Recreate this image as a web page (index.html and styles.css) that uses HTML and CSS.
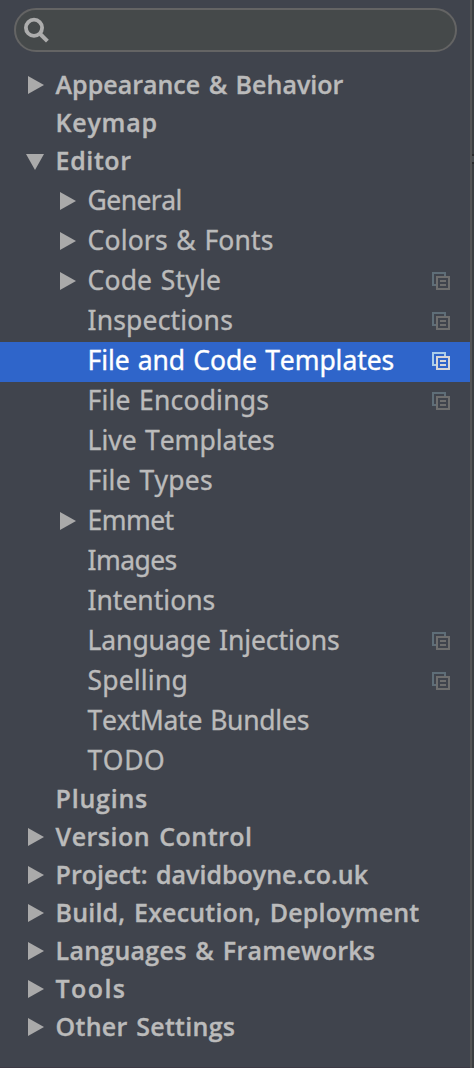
FILE: index.html
```
<!DOCTYPE html>
<html lang="en">
<head>
<meta charset="utf-8">
<title>Settings</title>
<link rel="stylesheet" href="styles.css">
</head>
<body>
<svg width="0" height="0" class="defs">
  <symbol id="right" viewBox="0 0 18 18"><path d="M2 0L18 9L2 18Z" fill="#aaa"/></symbol>
  <symbol id="down" viewBox="0 0 18 18"><path d="M0 1H18L9 17Z" fill="#aaa"/></symbol>
  <symbol id="copy" viewBox="0 0 18 18">
    <path class="back" d="M0 0H14V4H12V2H2V12H4V14H0Z"/>
    <path class="front" fill-rule="evenodd" d="M4 4H18V18H4ZM6 6V16H16V6ZM8 8H14V10H8ZM8 12H14V14H8Z"/>
  </symbol>
</svg>
<div class="window">
  <aside class="sidebar">
    <div class="search">
      <svg width="28" height="28" viewBox="0 0 28 28" fill="none" stroke="#adadad"><circle cx="10" cy="11.8" r="8.1" stroke-width="3.8"/><path d="M15.7 17.5L23.4 25.2" stroke-width="4"/></svg>
    </div>
    <nav class="tree">
      <div class="row top"><svg class="arrow"><use href="#right"/></svg><span>Appearance &amp; Behavior</span></div>
      <div class="row top"><i class="arrow"></i><span class="s8">Keymap</span></div>
      <div class="row top"><svg class="arrow down"><use href="#down"/></svg><span class="s7">Editor</span></div>
      <div class="row sub"><svg class="arrow"><use href="#right"/></svg><span class="n5">General</span></div>
      <div class="row sub"><svg class="arrow"><use href="#right"/></svg><span class="s2">Colors &amp; Fonts</span></div>
      <div class="row sub"><svg class="arrow"><use href="#right"/></svg><span class="s2">Code Style</span><svg class="copy"><use href="#copy"/></svg></div>
      <div class="row sub"><i class="arrow"></i><span class="s2">Inspections</span><svg class="copy"><use href="#copy"/></svg></div>
      <div class="row sub selected"><i class="arrow"></i><span class="n1">File and Code Templates</span><svg class="copy"><use href="#copy"/></svg></div>
      <div class="row sub"><i class="arrow"></i><span class="s2">File Encodings</span><svg class="copy"><use href="#copy"/></svg></div>
      <div class="row sub"><i class="arrow"></i><span>Live Templates</span></div>
      <div class="row sub"><i class="arrow"></i><span class="s3">File Types</span></div>
      <div class="row sub"><svg class="arrow"><use href="#right"/></svg><span class="n5">Emmet</span></div>
      <div class="row sub"><i class="arrow"></i><span class="n5">Images</span></div>
      <div class="row sub"><i class="arrow"></i><span>Intentions</span></div>
      <div class="row sub"><i class="arrow"></i><span class="n1">Language Injections</span><svg class="copy"><use href="#copy"/></svg></div>
      <div class="row sub"><i class="arrow"></i><span class="s2">Spelling</span><svg class="copy"><use href="#copy"/></svg></div>
      <div class="row sub"><i class="arrow"></i><span class="n2">TextMate Bundles</span></div>
      <div class="row sub"><i class="arrow"></i><span class="s6">TODO</span></div>
      <div class="row top"><i class="arrow"></i><span class="s8">Plugins</span></div>
      <div class="row top"><svg class="arrow"><use href="#right"/></svg><span class="s5">Version Control</span></div>
      <div class="row top"><svg class="arrow"><use href="#right"/></svg><span>Project: davidboyne.co.uk</span></div>
      <div class="row top"><svg class="arrow"><use href="#right"/></svg><span class="s2">Build, Execution, Deployment</span></div>
      <div class="row top"><svg class="arrow"><use href="#right"/></svg><span class="s3">Languages &amp; Frameworks</span></div>
      <div class="row top"><svg class="arrow"><use href="#right"/></svg><span class="s14">Tools</span></div>
      <div class="row top"><svg class="arrow"><use href="#right"/></svg><span class="s3">Other Settings</span></div>
    </nav>
  </aside>
  <div class="divider"></div>
  <div class="content"><div class="mark"></div></div>
</div>
</body>
</html>
```
FILE: styles.css
```
* { box-sizing: border-box; }
body { margin: 0; background: #40444d; }
.defs { position: absolute; }
.window { display: flex; width: 474px; height: 1068px; overflow: hidden; }
.sidebar { width: 470px; background: #40444d; border-bottom: 1px solid #3d3a45; }
.divider { width: 2px; background: #555555; }
.content { width: 2px; background: #3c3f41; padding-top: 154px; }
.mark { height: 10px; background: #4c5052; border: solid #2b2b2b; border-width: 2px 0; }

.search {
  display: flex; align-items: center;
  width: 443px; height: 44px; margin: 7.5px 0 16.5px 14px; padding-left: 8px;
  border: 2px solid #646464; border-radius: 22px; background: #45494a;
}
.row {
  display: flex; align-items: flex-start; color: #bbb;
  font-family: "Open Sans", "Noto Sans", sans-serif;
  font-kerning: none; white-space: nowrap; -webkit-text-stroke: .35px;
}
.top { height: 38px; padding-left: 26px; font-size: 25px; font-weight: 600; line-height: 33px; word-spacing: 2px; }
.sub { height: 40px; padding: 0 20px 0 58px; font-family: "Noto Sans", sans-serif; font-size: 26.5px; line-height: 36px; word-spacing: 1.4px; }
.arrow { flex: none; width: 18px; height: 18px; margin: 8px 11.6px 0 0; }
.sub .arrow { margin: 10px 11.5px 0 0; }
.arrow.down { margin-top: 9px; }
.copy { width: 18px; height: 18px; margin: 10px 0 0 auto; }
.back { fill: var(--back, #5f6e78); }
.front { fill: var(--front, #6e6e6e); }
.selected { background: #2f65ca; color: #fff; --back: #a9cdea; --front: #d6d6d6; }

.n5 { letter-spacing: -.55px; }
.n2 { letter-spacing: -.26px; }
.n1 { letter-spacing: -.08px; }
.s2 { letter-spacing: .18px; }
.s3 { letter-spacing: .26px; }
.s5 { letter-spacing: .5px; }
.s6 { letter-spacing: .6px; }
.s7 { letter-spacing: .6px; }
.s8 { letter-spacing: .75px; }
.s14 { letter-spacing: 1.4px; }
```
